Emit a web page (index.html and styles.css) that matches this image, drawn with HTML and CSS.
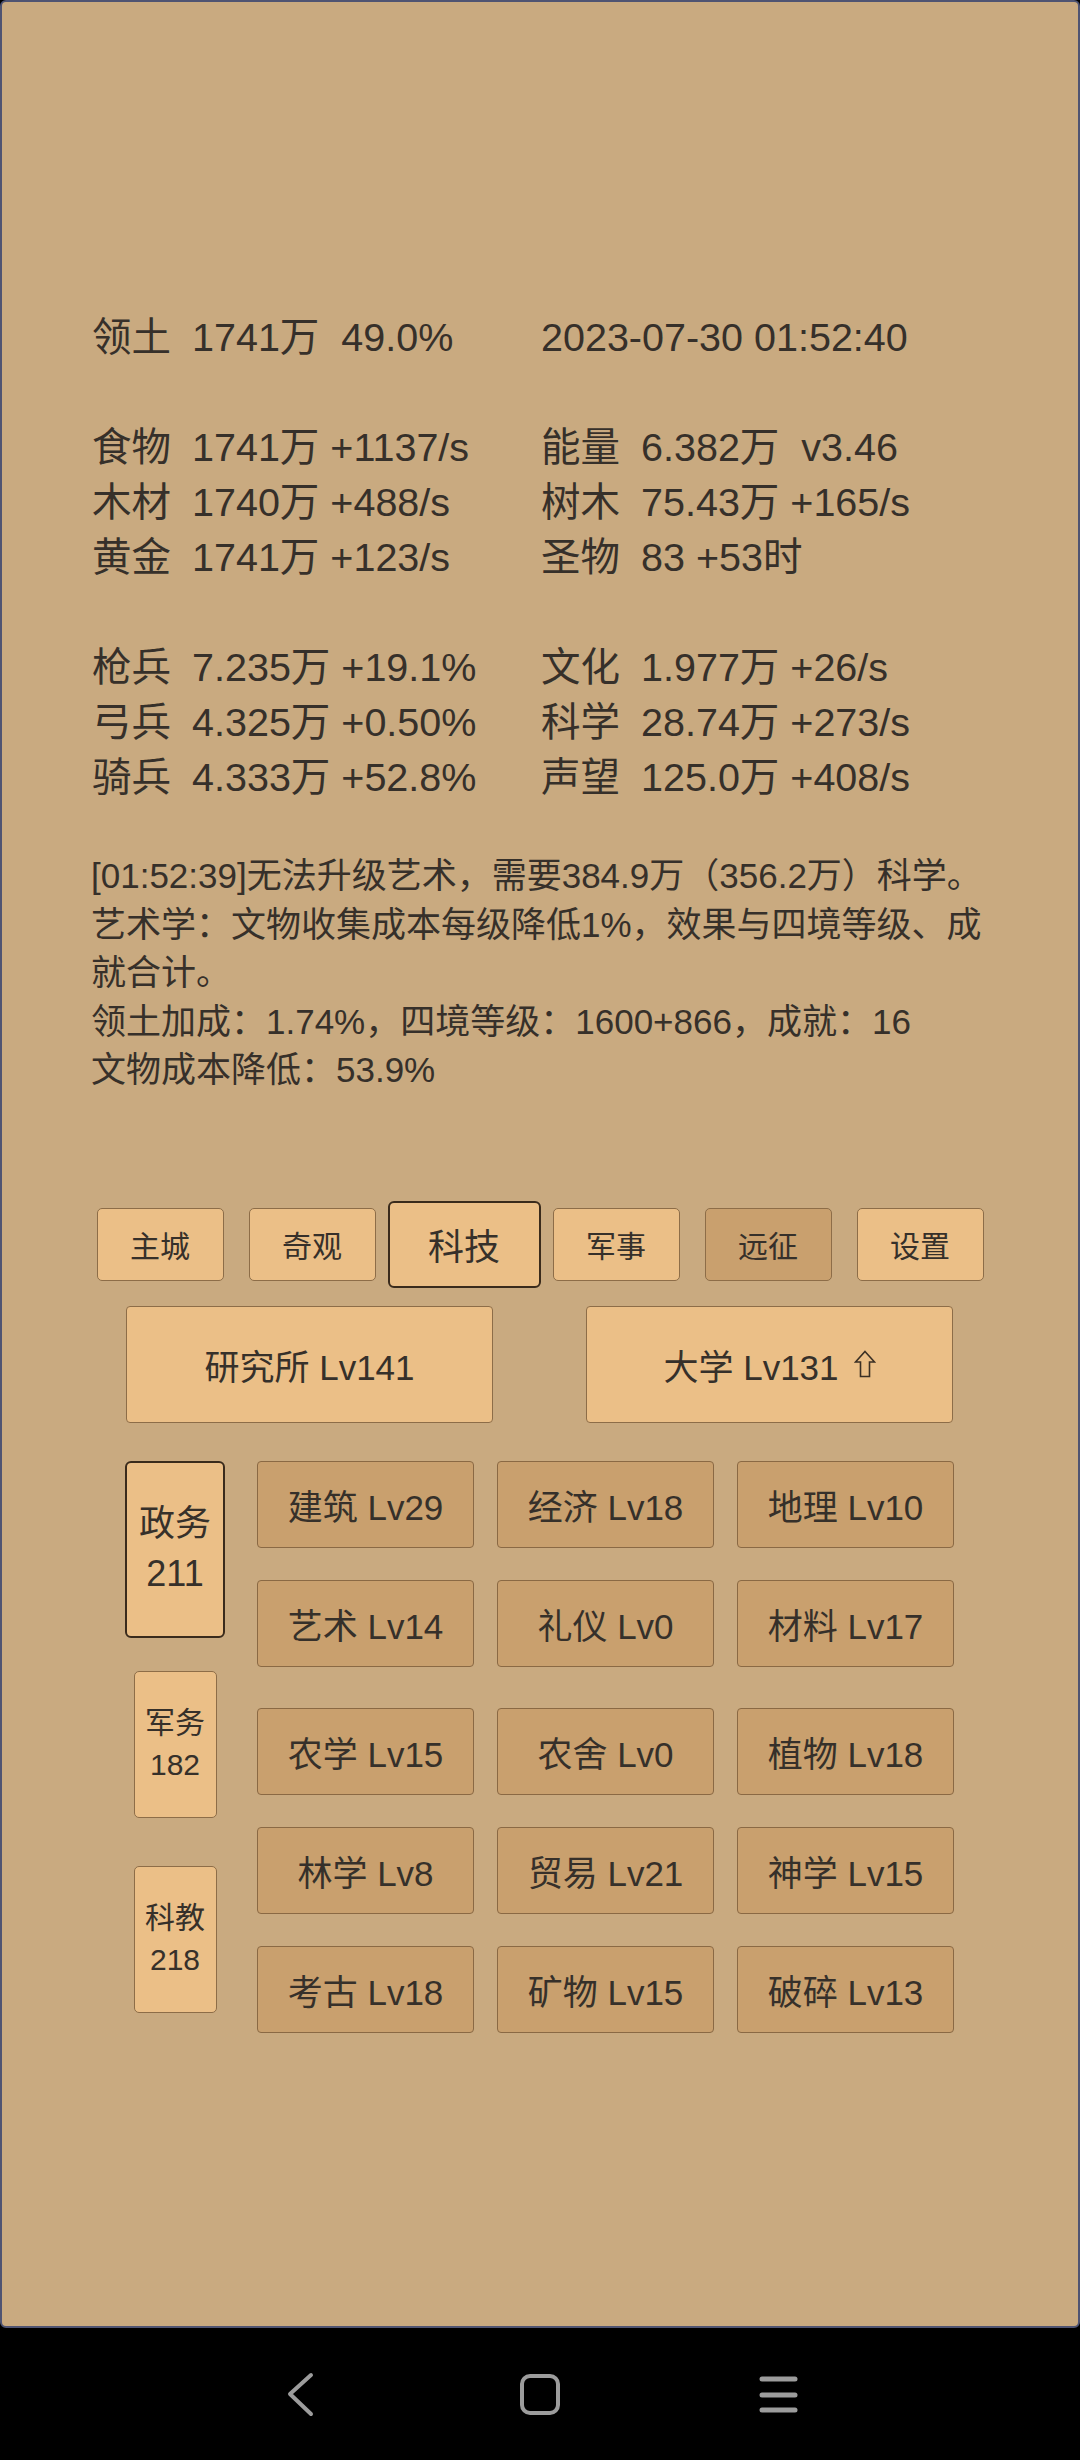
FILE: index.html
```html
<!DOCTYPE html>
<html lang="zh">
<head>
<meta charset="utf-8">
<link rel="stylesheet" href="styles.css">
</head>
<body>
<div class="screen">
  <div class="stats">
    <div class="cell"><span class="lbl">领土</span>1741万  49.0%</div>
    <div class="cell">2023-07-30 01:52:40</div>
    <div class="cell blank"></div><div class="cell blank"></div>
    <div class="cell"><span class="lbl">食物</span>1741万 +1137/s</div>
    <div class="cell"><span class="lbl">能量</span>6.382万  v3.46</div>
    <div class="cell"><span class="lbl">木材</span>1740万 +488/s</div>
    <div class="cell"><span class="lbl">树木</span>75.43万 +165/s</div>
    <div class="cell"><span class="lbl">黄金</span>1741万 +123/s</div>
    <div class="cell"><span class="lbl">圣物</span>83 +53时</div>
    <div class="cell blank"></div><div class="cell blank"></div>
    <div class="cell"><span class="lbl">枪兵</span>7.235万 +19.1%</div>
    <div class="cell"><span class="lbl">文化</span>1.977万 +26/s</div>
    <div class="cell"><span class="lbl">弓兵</span>4.325万 +0.50%</div>
    <div class="cell"><span class="lbl">科学</span>28.74万 +273/s</div>
    <div class="cell"><span class="lbl">骑兵</span>4.333万 +52.8%</div>
    <div class="cell"><span class="lbl">声望</span>125.0万 +408/s</div>
  </div>

  <div class="message">
    <p>[01:52:39]无法升级艺术，需要384.9万（356.2万）科学。</p>
    <p>艺术学：文物收集成本每级降低1%，效果与四境等级、成就合计。</p>
    <p>领土加成：1.74%，四境等级：1600+866，成就：16</p>
    <p>文物成本降低：53.9%</p>
  </div>

  <div class="tabs">
    <div class="slot"><div class="tab">主城</div></div>
    <div class="slot"><div class="tab">奇观</div></div>
    <div class="slot"><div class="tab active">科技</div></div>
    <div class="slot"><div class="tab">军事</div></div>
    <div class="slot"><div class="tab dark">远征</div></div>
    <div class="slot"><div class="tab">设置</div></div>
  </div>

  <div class="bigrow">
    <div class="big">研究所 Lv141</div>
    <div class="big">大学 Lv131<svg class="arrow" width="22" height="28" viewBox="0 0 22 28"><polygon points="11,1.5 20.5,12 15.5,12 15.5,26.5 6.5,26.5 6.5,12 1.5,12" fill="none" stroke="#3a2f24" stroke-width="1.6" stroke-linejoin="miter"/></svg></div>
  </div>

  <div class="lower">
    <div class="side">
      <div class="sideslot"><div class="sidebtn active">政务<br>211</div></div>
      <div class="sideslot"><div class="sidebtn">军务<br>182</div></div>
      <div class="sideslot"><div class="sidebtn">科教<br>218</div></div>
    </div>
    <div class="grids">
      <div class="grid">
        <div class="gbtn">建筑 Lv29</div>
        <div class="gbtn">经济 Lv18</div>
        <div class="gbtn">地理 Lv10</div>
        <div class="gbtn">艺术 Lv14</div>
        <div class="gbtn">礼仪 Lv0</div>
        <div class="gbtn">材料 Lv17</div>
      </div>
      <div class="grid second">
        <div class="gbtn">农学 Lv15</div>
        <div class="gbtn">农舍 Lv0</div>
        <div class="gbtn">植物 Lv18</div>
        <div class="gbtn">林学 Lv8</div>
        <div class="gbtn">贸易 Lv21</div>
        <div class="gbtn">神学 Lv15</div>
        <div class="gbtn">考古 Lv18</div>
        <div class="gbtn">矿物 Lv15</div>
        <div class="gbtn">破碎 Lv13</div>
      </div>
    </div>
  </div>
</div>
<div class="navbar">
  <svg class="navsvg" width="1080" height="132" viewBox="0 0 1080 132">
    <polyline points="311,47 290,66 311,86" fill="none" stroke="#9c9c9c" stroke-width="4" stroke-linecap="round" stroke-linejoin="round"/>
    <rect x="522" y="48" width="36" height="37" rx="8" ry="8" fill="none" stroke="#9c9c9c" stroke-width="4"/>
    <line x1="762" y1="51" x2="795" y2="51" stroke="#9c9c9c" stroke-width="5" stroke-linecap="round"/>
    <line x1="762" y1="67" x2="795" y2="67" stroke="#9c9c9c" stroke-width="5" stroke-linecap="round"/>
    <line x1="762" y1="82" x2="795" y2="82" stroke="#9c9c9c" stroke-width="5" stroke-linecap="round"/>
  </svg>
</div>
</body>
</html>
```
FILE: styles.css
```css
html, body {
  margin: 0;
  padding: 0;
}
body {
  width: 1080px;
  height: 2460px;
  background: #000;
  font-family: "Liberation Sans", "Noto Sans CJK SC", sans-serif;
  color: #36302a;
  overflow: hidden;
}
.screen {
  box-sizing: border-box;
  width: 1080px;
  height: 2328px;
  background: #c9aa80;
  border: 2px solid #4f5472;
  border-radius: 6px;
  padding-top: 308px;
}
.stats {
  display: grid;
  grid-template-columns: 449px 1fr;
  grid-auto-rows: 55px;
  padding-left: 90px;
  font-size: 39.5px;
  line-height: 55px;
}
.cell {
  white-space: pre;
}
.lbl {
  display: inline-block;
  width: 100px;
}
.message {
  margin-top: 47px;
  padding: 0 89px;
  font-size: 35px;
  line-height: 48.5px;
}
.message p {
  margin: 0;
}
.tabs {
  display: flex;
  margin: 113px 0 0 82px;
  width: 912px;
  height: 73px;
}
.slot {
  width: 152px;
  display: flex;
  align-items: center;
  justify-content: center;
}
.tab {
  box-sizing: border-box;
  width: 127px;
  height: 73px;
  background: #ebbf87;
  border: 1px solid #8d6d48;
  border-radius: 5px;
  display: flex;
  align-items: center;
  justify-content: center;
  font-size: 30px;
  flex: none;
}
.tab.active {
  width: 153px;
  height: 87px;
  font-size: 36px;
  border: 2px solid #3a2b1c;
  border-radius: 6px;
}
.tab.dark {
  background: #c9a06e;
}
.bigrow {
  display: flex;
  gap: 93px;
  margin: 25px 0 0 124px;
}
.big {
  box-sizing: border-box;
  width: 367px;
  height: 117px;
  background: #ebbf87;
  border: 1px solid #8d6d48;
  border-radius: 4px;
  display: flex;
  align-items: center;
  justify-content: center;
  font-size: 35px;
}
.arrow {
  display: block;
  margin-left: 15px;
  margin-top: -1px;
}
.lower {
  display: flex;
  margin: 29px 0 0 123px;
}
.side {
  width: 100px;
  display: flex;
  flex-direction: column;
}
.sideslot {
  height: 195px;
  display: flex;
  align-items: center;
  justify-content: center;
}
.sidebtn {
  box-sizing: border-box;
  width: 83px;
  height: 147px;
  background: #ebbf87;
  border: 1px solid #8d6d48;
  border-radius: 5px;
  display: flex;
  align-items: center;
  justify-content: center;
  text-align: center;
  font-size: 30px;
  line-height: 42px;
  flex: none;
}
.sidebtn.active {
  width: 100px;
  height: 177px;
  font-size: 36px;
  line-height: 50px;
  border: 2px solid #3a2b1c;
  border-radius: 6px;
}
.grids {
  margin-left: 32px;
  margin-top: 9px;
}
.grid {
  display: grid;
  grid-template-columns: repeat(3, 217px);
  grid-auto-rows: 87px;
  column-gap: 23px;
  row-gap: 32px;
}
.grid.second {
  margin-top: 41px;
}
.gbtn {
  box-sizing: border-box;
  background: #c9a06e;
  border: 1px solid #8a6944;
  border-radius: 4px;
  display: flex;
  align-items: center;
  justify-content: center;
  font-size: 35px;
}
.navbar {
  height: 132px;
  background: #000;
}
.navsvg {
  display: block;
}
```
